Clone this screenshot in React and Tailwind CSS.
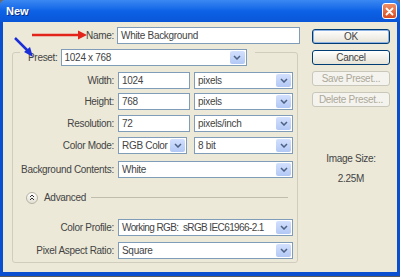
import React from "react";

const Chevron = () => (
  <svg width="8" height="5" viewBox="0 0 8 5">
    <path d="M1 1 L4 4 L7 1" fill="none" stroke="#4d6185" strokeWidth="1.5" />
  </svg>
);

const Select = ({ value, w, tight }) => (
  <div className={`${w} h-[17px] border border-[#7f9db9] bg-white flex items-stretch`}>
    <div className={`flex-1 pl-[3px] flex items-center text-[#444] whitespace-pre overflow-hidden ${tight ? "tracking-[-0.6px]" : ""}`}>{value}</div>
    <div className="w-[15px] m-[1px] rounded-[2px] bg-gradient-to-b from-[#d3e0fd] to-[#b2c8f5] flex items-center justify-center">
      <Chevron />
    </div>
  </div>
);

const Input = ({ value, w }) => (
  <div className={`${w} h-[17px] border border-[#7f9db9] bg-white flex items-center pl-[3px] text-[#444] whitespace-nowrap overflow-hidden`}>
    {value}
  </div>
);

const Row = ({ label, children, mt }) => (
  <div className={`flex items-center h-[17px] ${mt}`}>
    <div className="w-[101px] text-right text-[#444] whitespace-nowrap">{label}</div>
    <div className="ml-[4px] flex gap-[4px]">{children}</div>
  </div>
);

const Button = ({ children, disabled, def }) => (
  <div
    className={`h-[15px] w-[78px] rounded-[3px] border flex items-center justify-center whitespace-nowrap ${
      disabled
        ? "border-[#c9c7ba] bg-[#f4f3ee] text-[#aca899]"
        : def
        ? "border-[#003c74] bg-gradient-to-b from-[#ffffff] to-[#e6e3d6] text-[#444] shadow-[inset_0_0_0_1px_#8db2e3]"
        : "border-[#003c74] bg-gradient-to-b from-[#ffffff] to-[#e6e3d6] text-[#444]"
    }`}
  >
    {children}
  </div>
);

export default function App() {
  return (
    <div
      className="relative w-[400px] h-[277px] flex flex-col overflow-hidden text-[10px] tracking-[-0.3px] bg-[#6b6b6b]"
      style={{ fontFamily: '"Liberation Sans", Arial, sans-serif' }}
    >
      {/* Title bar */}
      <div className="h-[22px] flex items-center justify-between pl-[6px] pr-[3px] bg-gradient-to-b from-[#3a88f2] via-[#0c62e6] to-[#0a55d8] rounded-t-[5px]">
        <div className="text-white font-bold text-[11px] tracking-normal [text-shadow:1px_1px_0_#0a2f8a]">New</div>
        <div className="w-[15px] h-[16px] rounded-[3px] border border-white bg-gradient-to-b from-[#ee8e64] to-[#d84a1e] flex items-center justify-center">
          <svg width="9" height="9" viewBox="0 0 9 9">
            <path d="M1.5 1.5 L7.5 7.5 M7.5 1.5 L1.5 7.5" stroke="white" strokeWidth="1.8" strokeLinecap="round" />
          </svg>
        </div>
      </div>

      {/* Body */}
      <div className="flex-1 flex bg-[#ece9d8] border-l-[3px] border-r-[3px] border-b-[4px] border-[#0a4fd0]">
        {/* Left column */}
        <div className="w-[297px] flex flex-col">
          <div className="flex items-center h-[17px] mt-[5px]">
            <div className="w-[111px] text-right text-[#444]">Name:</div>
            <div className="ml-[3px]">
              <Input value="White Background" w="w-[183px]" />
            </div>
          </div>

          <div className="ml-[9px] mt-[8px] w-[286px] border border-[#d0cdbe] rounded-[3px] pb-[3px] flex flex-col">
            <div className="-mt-[4px] ml-[7px] pl-[8px] pr-[8px] w-fit bg-[#ece9d8] flex items-center gap-[3px] h-[17px]">
              <div className="text-[#444]">Preset:</div>
              <Select value="1024 x 768" w="w-[186px]" />
            </div>

            <Row label="Width:" mt="mt-[6px]">
              <Input value="1024" w="w-[72px]" />
              <Select value="pixels" w="w-[99px]" />
            </Row>
            <Row label="Height:" mt="mt-[4px]">
              <Input value="768" w="w-[72px]" />
              <Select value="pixels" w="w-[99px]" />
            </Row>
            <Row label="Resolution:" mt="mt-[5px]">
              <Input value="72" w="w-[72px]" />
              <Select value="pixels/inch" w="w-[99px]" />
            </Row>
            <div className="flex items-center h-[17px] mt-[5px]">
              <div className="w-[101px] text-right text-[#444]">Color Mode:</div>
              <div className="ml-[4px] flex gap-[7px]">
                <Select value="RGB Color" w="w-[69px]" />
                <Select value="8 bit" w="w-[99px]" />
              </div>
            </div>
            <Row label="Background Contents:" mt="mt-[7px]">
              <Select value="White" w="w-[175px]" />
            </Row>

            <div className="flex items-center h-[13px] mt-[13px] pl-[13px]">
              <div className="w-[12px] h-[12px] rounded-full border border-[#b5b2a4] bg-gradient-to-b from-white to-[#e2dfd2] flex items-center justify-center">
                <svg width="6" height="7" viewBox="0 0 6 7">
                  <path d="M1 3 L3 1 L5 3 M1 6 L3 4 L5 6" fill="none" stroke="#333" strokeWidth="1" />
                </svg>
              </div>
              <div className="ml-[6px] text-[#444]">Advanced</div>
              <div className="ml-[5px] w-[197px] h-px bg-[#c0bdae]" />
            </div>

            <Row label="Color Profile:" mt="mt-[15px]">
              <Select value="Working RGB:  sRGB IEC61966-2.1" w="w-[175px]" tight />
            </Row>
            <Row label="Pixel Aspect Ratio:" mt="mt-[6px]">
              <Select value="Square" w="w-[175px]" />
            </Row>
          </div>
        </div>

        {/* Right column */}
        <div className="ml-[12px] w-[78px] flex flex-col pt-[7px] gap-[6px]">
          <Button def>OK</Button>
          <Button>Cancel</Button>
          <Button disabled>Save Preset...</Button>
          <Button disabled>Delete Preset...</Button>
          <div className="mt-[38px] text-center text-[#444]">Image Size:</div>
          <div className="-mt-[1px] text-center text-[#444]">2.25M</div>
        </div>
      </div>
      <div className="h-[1px] bg-[#5a5a5a]" />

      {/* Annotation arrows */}
      <svg className="absolute left-0 top-0 pointer-events-none" width="400" height="277">
        <line x1="32" y1="35" x2="79" y2="35" stroke="#e3241b" strokeWidth="2.5" />
        <polygon points="78,30.5 87,35 78,39.5" fill="#e3241b" />
        <line x1="15" y1="38" x2="28" y2="51" stroke="#1a2fd8" strokeWidth="2.5" />
        <polygon points="24,52 33,57 30,47" fill="#1a2fd8" />
      </svg>
    </div>
  );
}
